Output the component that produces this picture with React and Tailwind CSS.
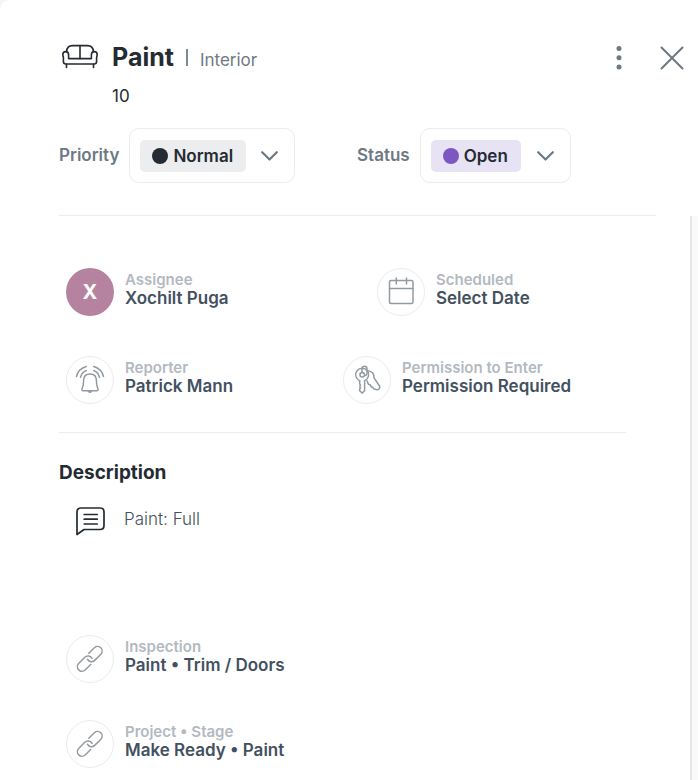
import React from "react";

function SofaIcon() {
  return (
    <svg width="36" height="26" viewBox="0 0 36 26" fill="none" stroke="#242b33" strokeWidth="1.600" strokeLinecap="round" strokeLinejoin="round" aria-hidden="true">
      <path d="M4.600 7.600C4.800 3.400 6.800 1.600 10.600 1.600h14.800c3.800 0 5.800 1.800 6 6" />
      <path d="M18 1.600v13" />
      <path d="M6.600 14.600h22.800V10.800c0-2 1.200-3.200 3-3.200s2.800 1.200 2.800 3c0 1-.5 2-.6 3v4c0 1.600-.8 2.400-2.400 2.400H3.800c-1.600 0-2.400-.8-2.400-2.400v-4c-.1-1-.6-2-.6-3 0-1.800 1-3 2.800-3s3 1.200 3 3.200z" />
      <path d="M4.500 20.200v3.200M31.500 20.200v3.200" />
    </svg>
  );
}

function BellIcon() {
  return (
    <>
      <path d="M24 18c-4.400 0-6.400 3-6.400 6.500 0 4-.4 6-1.500 8.300-.6 1.200 0 2 1 2h13.800c1 0 1.600-.8 1-2-1.100-2.300-1.500-4.300-1.500-8.300 0-3.500-2-6.500-6.400-6.500z" />
      <path d="M22.400 35q1.600 2.600 3.200 0" />
      <path d="M10.500 20.500c1.200-5 4.800-8.600 9.800-10M14.500 21.200c.8-3.200 2.800-5.600 5.800-6.700" />
      <path d="M37.500 20.500c-1.200-5-4.800-8.600-9.800-10M33.500 21.200c-.8-3.200-2.800-5.600-5.800-6.700" />
    </>
  );
}

function CalendarIcon() {
  return (
    <>
      <rect x="12.500" y="12.500" width="23.500" height="23" rx="1.500" />
      <path d="M12.500 20.500h23.500M19.300 10v6M29.500 10v6" />
    </>
  );
}

function KeysIcon() {
  return (
    <>
      <path d="M16.700 24.700a6.500 6.500 0 1 1 4.900 0v10l-2.300 2.400-2.600-2.400v-2l.9-1-.9-1.200.9-1.200-.9-1.200z" />
      <circle cx="19.200" cy="18.700" r="2.300" />
      <path d="M19 16.400v-3.400c0-3.600 5-3.600 5 0v4.500c0 1.500-1.200 2.200-2.400 1.900" />
      <path d="M25.500 14.900c3.500.3 5.900 3.300 5.400 6.700l5.600 8.400c.6 2-.4 3.700-2.400 3.700l-3-.6-1.400-1.900-1.700-.4-.5-1.800-2-.8-1.500-3.400" />
    </>
  );
}

function LinkIcon() {
  return (
    <>
      <path d="M22.800 18.200l5.600-5.500a4.600 4.600 0 0 1 6.500 6.500l-6.200 6.200a4.600 4.600 0 0 1-7.300-1.200" />
      <path d="M24.700 29.500l-5.600 5.500a4.600 4.600 0 0 1-6.500-6.500l6.200-6.200a4.600 4.600 0 0 1 7.300 1.200" />
    </>
  );
}

function CommentIcon() {
  return (
    <svg width="30" height="29" viewBox="0 0 30 29" fill="none" stroke="#242b33" strokeWidth="1.700" strokeLinecap="round" strokeLinejoin="round" aria-hidden="true">
      <path d="M1 27.500V5c0-2.600 1.400-4 4-4h19c2.600 0 4 1.400 4 4v13.500c0 2.600-1.400 4-4 4H8z" />
      <path d="M8.200 7.500h13M8.200 12.200h13M8.200 17h13" />
    </svg>
  );
}

function RoundIcon({ children }) {
  return (
    <svg className="size-12 shrink-0 rounded-full border border-[#ececee]" viewBox="1 1 46 46" fill="none" stroke="#929aa2" strokeWidth="1.500" strokeLinecap="round" strokeLinejoin="round" aria-hidden="true">
      {children}
    </svg>
  );
}

function Detail({ icon, label, value, className = "" }) {
  return (
    <div className={"flex gap-[11px] " + className}>
      {icon}
      <div className="pt-[3px] whitespace-nowrap">
        <div className="text-[15px] leading-[18px] font-semibold text-[#b3b9bf]">{label}</div>
        <div className="text-[17px] leading-[19px] font-semibold text-[#43515f]">{value}</div>
      </div>
    </div>
  );
}

function Picker({ id, label, options, box, chip, dot, className = "" }) {
  return (
    <div className={"flex items-center gap-[10px] " + className}>
      <label htmlFor={id} className="pb-[2px] text-[17px] leading-6 font-semibold text-[#6d7983]">{label}</label>
      <div className={"grid h-[55px] items-center rounded-[10px] border border-[#ececee] " + box}>
        <span className={"[grid-area:1/1] ml-[10px] flex h-8 items-center rounded-[5px] pl-3 " + chip}>
          <span className={"size-4 rounded-full " + dot} />
        </span>
        <select id={id} className="[grid-area:1/1] z-10 h-full w-full appearance-none bg-transparent pt-[2px] pl-[43px] text-[17px] font-semibold text-[#242b33]">
          {options.map((option) => (
            <option key={option}>{option}</option>
          ))}
        </select>
        <svg className="[grid-area:1/1] mr-4 justify-self-end" width="17" height="10" viewBox="0 0 17 10" fill="none" stroke="#6d7983" strokeWidth="2.200" strokeLinecap="round" strokeLinejoin="round" aria-hidden="true">
          <path d="M1.200 1.200l7.300 7.300 7.300-7.300" />
        </svg>
      </div>
    </div>
  );
}

export default function App() {
  return (
    <div className="min-h-screen bg-[#f5f5f5] font-['Inter','Liberation_Sans',sans-serif]">
      <main className="flex min-h-screen flex-col rounded-tl-[10px] bg-white">
        <header className="pl-[59px]">
          <div className="flex items-start justify-between pt-[42px] pr-[14px]">
            <div className="flex gap-[14px] pl-[3px]">
              <div className="pt-[2px]"><SofaIcon /></div>
              <div>
                <div className="flex items-baseline">
                  <h1 className="text-[25px] leading-[30px] font-bold text-[#242b33]">Paint</h1>
                  <span className="ml-3 h-[17px] w-[2px] bg-[#7d8993]" />
                  <span className="ml-3 text-[17px] leading-6 text-[#6d7983]">Interior</span>
                </div>
                <p className="mt-3 text-[17px] leading-6 text-[#242b33]">10</p>
              </div>
            </div>
            <div className="flex items-center gap-[38px] pt-[3px]">
              <button type="button" aria-label="More options">
                <svg width="6" height="25" viewBox="0 0 6 25" fill="#6d7983" aria-hidden="true">
                  <circle cx="3" cy="3.500" r="2.500" />
                  <circle cx="3" cy="12.700" r="2.500" />
                  <circle cx="3" cy="22" r="2.500" />
                </svg>
              </button>
              <button type="button" aria-label="Close">
                <svg width="24" height="24" viewBox="0 0 24 24" fill="none" stroke="#6d7983" strokeWidth="2" strokeLinecap="round" aria-hidden="true">
                  <path d="M1.500 1.500l21 21M22.500 1.500l-21 21" />
                </svg>
              </button>
            </div>
          </div>
          <div className="mr-[42px] flex border-b border-[#ececee] pt-5 pb-8">
            <Picker id="priority" label="Priority" options={["Normal", "Low", "High"]} box="w-[166px]" chip="w-[106px] bg-[#ecedee]" dot="bg-[#242b33]" className="w-[298px]" />
            <Picker id="status" label="Status" options={["Open", "In Progress", "Closed"]} box="w-[151px]" chip="w-[90px] bg-[#e7e2f4]" dot="bg-[#7c57c1]" />
          </div>
        </header>

        <div className="flex flex-1">
          <div className="flex-1 pr-16 pl-[59px]">
            <section className="flex flex-col gap-10 border-b border-[#ececee] pt-[52px] pb-7 pl-[7px]">
              <div className="flex">
                <Detail
                  className="w-[311px]"
                  label="Assignee"
                  value="Xochilt Puga"
                  icon={<span className="flex size-12 shrink-0 items-center justify-center rounded-full bg-[#b5839f] text-[20px] font-bold text-white">X</span>}
                />
                <Detail label="Scheduled" value="Select Date" icon={<RoundIcon><CalendarIcon /></RoundIcon>} />
              </div>
              <div className="flex">
                <Detail className="w-[277px]" label="Reporter" value="Patrick Mann" icon={<RoundIcon><BellIcon /></RoundIcon>} />
                <Detail label="Permission to Enter" value="Permission Required" icon={<RoundIcon><KeysIcon /></RoundIcon>} />
              </div>
            </section>

            <section className="pt-7">
              <h2 className="text-[19px] leading-6 font-bold text-[#242b33]">Description</h2>
              <div className="mt-[22px] flex min-h-[128px] gap-[18px] pl-[17px]">
                <div><CommentIcon /></div>
                <p className="text-[17px] leading-6 font-light text-[#43515f]">Paint: Full</p>
              </div>
              <div className="flex flex-col gap-[37px] pb-3 pl-[7px]">
                <Detail label="Inspection" value="Paint • Trim / Doors" icon={<RoundIcon><LinkIcon /></RoundIcon>} />
                <Detail label="Project • Stage" value="Make Ready • Paint" icon={<RoundIcon><LinkIcon /></RoundIcon>} />
              </div>
            </section>
          </div>
          <div className="w-2 border-l-2 border-[#e7e7e7] bg-[#fafafa]" />
        </div>
      </main>
    </div>
  );
}
